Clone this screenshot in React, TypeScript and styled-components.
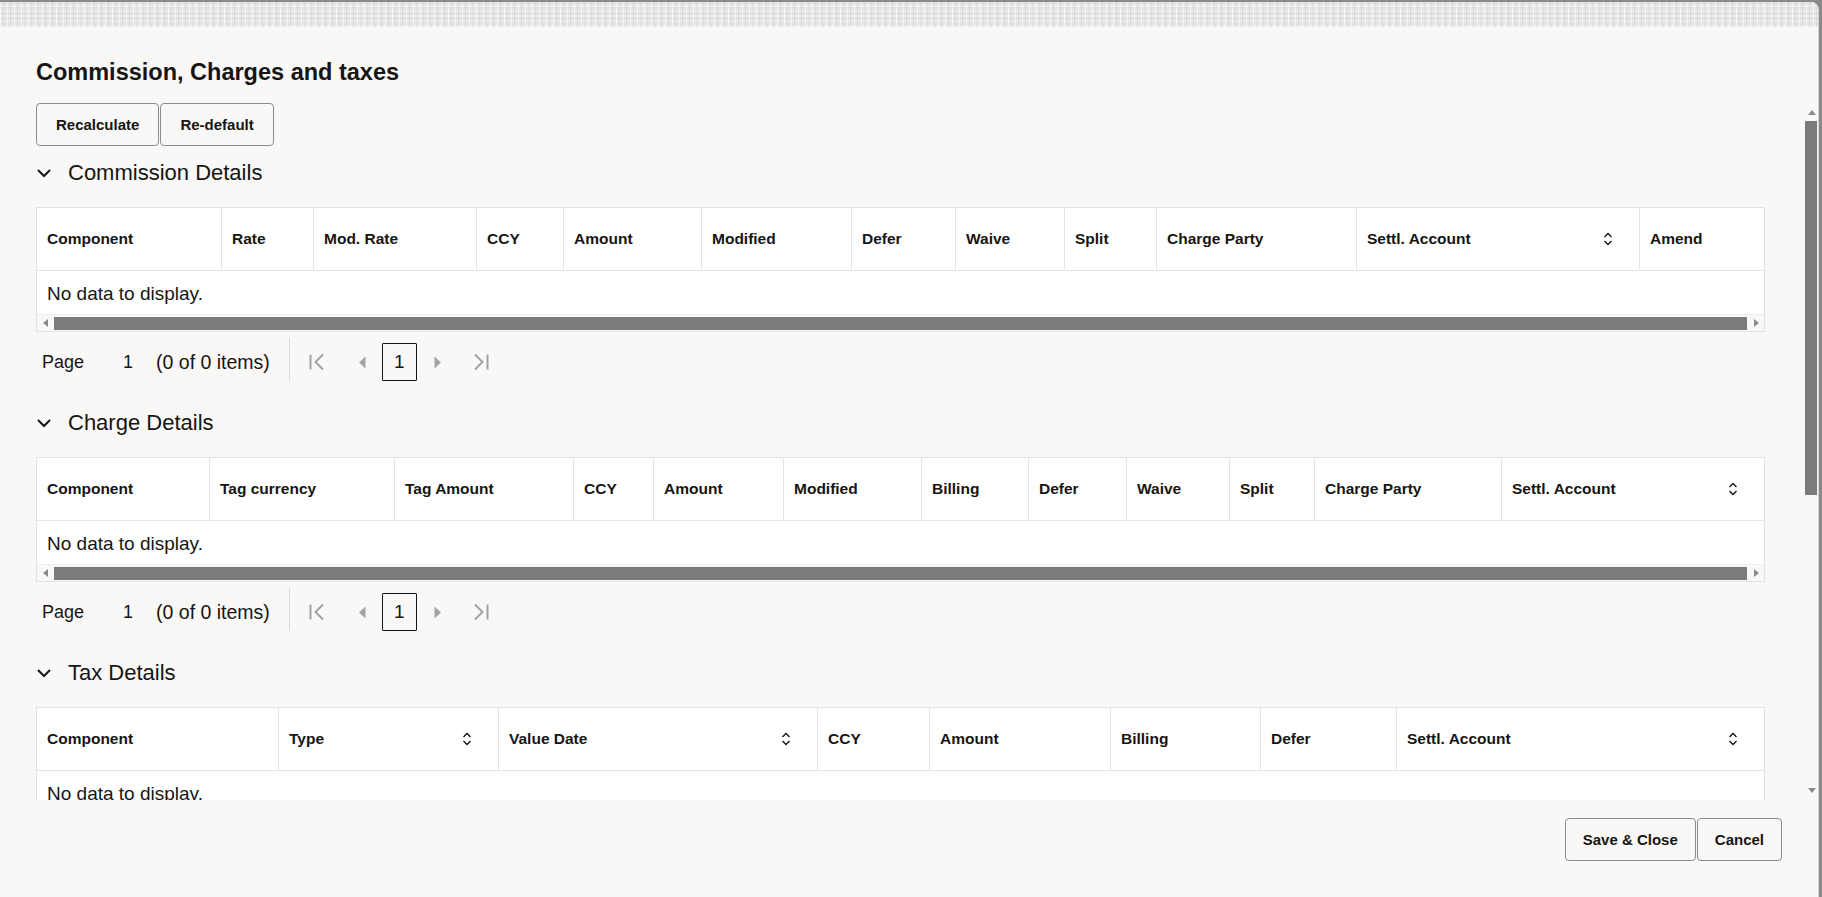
import React from 'react';
import styled, { createGlobalStyle } from 'styled-components';

const GlobalStyle = createGlobalStyle`
	html,
	body {
		margin: 0;
		padding: 0;
		height: 100%;
	}
	body {
		background: #8b8a88;
		color: #161513;
		font-family: 'Liberation Sans', Arial, sans-serif;
		overflow: hidden;
	}
	#root {
		height: 100%;
	}
`;

type Column = { label: string; width: number; sortable?: boolean };

const commissionCols: Column[] = [
	{ label: 'Component', width: 184 },
	{ label: 'Rate', width: 92 },
	{ label: 'Mod. Rate', width: 163 },
	{ label: 'CCY', width: 87 },
	{ label: 'Amount', width: 138 },
	{ label: 'Modified', width: 150 },
	{ label: 'Defer', width: 104 },
	{ label: 'Waive', width: 109 },
	{ label: 'Split', width: 92 },
	{ label: 'Charge Party', width: 200 },
	{ label: 'Settl. Account', width: 283, sortable: true },
	{ label: 'Amend', width: 0 },
];

const chargeCols: Column[] = [
	{ label: 'Component', width: 172 },
	{ label: 'Tag currency', width: 185 },
	{ label: 'Tag Amount', width: 179 },
	{ label: 'CCY', width: 80 },
	{ label: 'Amount', width: 130 },
	{ label: 'Modified', width: 138 },
	{ label: 'Billing', width: 107 },
	{ label: 'Defer', width: 98 },
	{ label: 'Waive', width: 103 },
	{ label: 'Split', width: 85 },
	{ label: 'Charge Party', width: 187 },
	{ label: 'Settl. Account', width: 0, sortable: true },
];

const taxCols: Column[] = [
	{ label: 'Component', width: 241 },
	{ label: 'Type', width: 220, sortable: true },
	{ label: 'Value Date', width: 319, sortable: true },
	{ label: 'CCY', width: 112 },
	{ label: 'Amount', width: 181 },
	{ label: 'Billing', width: 150 },
	{ label: 'Defer', width: 136 },
	{ label: 'Settl. Account', width: 0, sortable: true },
];

const template = (cols: Column[]) => cols.map((c) => (c.width ? `${c.width}px` : '1fr')).join(' ');

// ---------- frame ----------

const Frame = styled.div`
	width: 1819px;
	height: 100vh;
	padding-top: 2px;
	box-sizing: border-box;
`;

const Dialog = styled.div`
	height: 100%;
	display: flex;
	flex-direction: column;
	background: #f9f8f6;
	border-right: 1px solid #d2d1cf;
	border-top-right-radius: 8px;
	overflow: hidden;
`;

const Strip = styled.div`
	flex: none;
	height: 25px;
	background:
		repeating-linear-gradient(90deg, rgba(255, 255, 255, 0.55) 0 1px, transparent 1px 3px, rgba(0, 0, 0, 0.05) 3px 4px, transparent 4px 7px),
		repeating-linear-gradient(0deg, rgba(255, 255, 255, 0.4) 0 2px, transparent 2px 5px),
		#e3e2e0;
`;

const Header = styled.div`
	flex: none;
	height: 76px;
	box-sizing: border-box;
	padding: 31px 36px 0;
`;

const Title = styled.h1`
	margin: 0;
	font-size: 23.5px;
	line-height: 28px;
	font-weight: 700;
	color: #161513;
`;

const ScrollArea = styled.div`
	flex: none;
	height: 697px;
	display: flex;
`;

const Content = styled.div`
	flex: 1;
	min-width: 0;
	overflow: hidden;
	padding: 0 40px 0 36px;
`;

const VScroll = styled.div`
	flex: none;
	width: 13px;
	display: flex;
	flex-direction: column;
	align-items: center;
	padding: 5px 0 5px;
	box-sizing: border-box;
`;

const VArrow = styled.div`
	height: 10px;
	width: 13px;
	display: flex;
	align-items: center;
	justify-content: center;
`;

const VThumb = styled.div`
	margin-top: 3px;
	width: 12px;
	height: 374px;
	align-self: flex-start;
	background: #7b7b7b;
`;

const Spacer = styled.div`
	flex: 1;
`;

const Footer = styled.div`
	flex: 1;
	display: flex;
	justify-content: flex-end;
	align-items: flex-start;
	padding: 18px 36px 0 0;
	gap: 1px;
`;

// ---------- buttons ----------

const ButtonRow = styled.div`
	display: flex;
	gap: 1px;
	margin-bottom: 7px;
`;

const Button = styled.button<{ $compact?: boolean }>`
	height: 43px;
	padding: 0 ${(p) => (p.$compact ? 17 : 19)}px;
	border: 1px solid #8e8c8a;
	border-radius: 4px;
	background: transparent;
	color: #161513;
	font-family: 'Liberation Sans', Arial, sans-serif;
	font-size: 15px;
	font-weight: 700;
	cursor: pointer;
`;

// ---------- sections ----------

const Section = styled.section`
	& + & {
		margin-top: 17px;
	}
`;

const SectionHeader = styled.div`
	height: 40px;
	display: flex;
	align-items: center;
	gap: 16px;
	margin-bottom: 14px;
	font-size: 22px;
	color: #161513;
`;

const Table = styled.div`
	border: 1px solid #e4e3e1;
	background: #fff;
`;

const HeadRow = styled.div<{ $cols: string }>`
	display: grid;
	grid-template-columns: ${(p) => p.$cols};
	height: 62px;
	border-bottom: 1px solid #e4e3e1;
`;

const HeadCell = styled.div`
	display: flex;
	align-items: center;
	justify-content: space-between;
	padding: 0 10px;
	font-size: 15.5px;
	font-weight: 700;
	white-space: nowrap;
	& + & {
		border-left: 1px solid #e4e3e1;
	}
	svg {
		margin-right: 16px;
	}
`;

const EmptyRow = styled.div`
	height: 43px;
	display: flex;
	align-items: center;
	padding: 2px 10px 0;
	box-sizing: border-box;
	font-size: 19px;
`;

const HScroll = styled.div`
	height: 17px;
	display: flex;
	align-items: stretch;
	background: #f8f8f8;
	border-top: 1px solid #eeeeee;
	box-sizing: border-box;
`;

const HArrow = styled.div`
	width: 17px;
	display: flex;
	align-items: center;
	justify-content: center;
`;

const HThumb = styled.div`
	flex: 1;
	margin: 2px 0 1px;
	background: #7b7b7b;
`;

// ---------- pager ----------

const Pager = styled.div`
	height: 48px;
	margin-top: 6px;
	display: flex;
	align-items: center;
	font-size: 18px;
	color: #161513;
`;

const PageLabel = styled.span`
	margin-left: 6px;
`;

const PageInput = styled.span`
	width: 50px;
	margin-left: 19px;
	text-align: center;
`;

const Items = styled.span`
	margin-left: 3px;
	font-size: 19.5px;
`;

const Divider = styled.div`
	align-self: flex-start;
	width: 1px;
	height: 43px;
	margin-left: 19px;
	background: #d9d8d6;
`;

const NavBtn = styled.div<{ $gap: number }>`
	width: 40px;
	height: 38px;
	margin-left: ${(p) => p.$gap}px;
	display: flex;
	align-items: center;
	justify-content: center;
	color: #a3a2a0;
`;

const PageBox = styled.div`
	width: 35px;
	height: 38px;
	box-sizing: border-box;
	border: 1.5px solid #161513;
	border-radius: 1px;
	display: flex;
	align-items: center;
	justify-content: center;
	font-size: 19px;
`;

// ---------- icons ----------

const Chevron = () => (
	<svg width='16' height='10' viewBox='0 0 16 10'>
		<path d='M2 2 L8 8 L14 2' fill='none' stroke='#161513' strokeWidth='2' />
	</svg>
);

const SortIcon = () => (
	<svg width='10' height='14' viewBox='0 0 10 14'>
		<path
			d='M1.5 5 L5 1.5 L8.5 5 M1.5 9 L5 12.5 L8.5 9'
			fill='none'
			stroke='#161513'
			strokeWidth='1.4'
		/>
	</svg>
);

const FirstIcon = () => (
	<svg width='18' height='18' viewBox='0 0 18 18'>
		<path d='M2.5 1.5 V16.5 M15 1.5 L7.5 9 L15 16.5' fill='none' stroke='currentColor' strokeWidth='2' />
	</svg>
);

const LastIcon = () => (
	<svg width='18' height='18' viewBox='0 0 18 18'>
		<path d='M15.5 1.5 V16.5 M3 1.5 L10.5 9 L3 16.5' fill='none' stroke='currentColor' strokeWidth='2' />
	</svg>
);

const PrevIcon = () => (
	<svg width='8' height='13' viewBox='0 0 8 13'>
		<path d='M7.5 0.5 L1 6.5 L7.5 12.5 Z' fill='currentColor' />
	</svg>
);

const NextIcon = () => (
	<svg width='8' height='13' viewBox='0 0 8 13'>
		<path d='M0.5 0.5 L7 6.5 L0.5 12.5 Z' fill='currentColor' />
	</svg>
);

const Tri = ({ dir }: { dir: 'up' | 'down' | 'left' | 'right' }) => {
	const d = {
		up: 'M0 6 L4 1 L8 6 Z',
		down: 'M0 2 L4 7 L8 2 Z',
		left: 'M6 0 L1 4 L6 8 Z',
		right: 'M2 0 L7 4 L2 8 Z',
	}[dir];
	return (
		<svg width='8' height='8' viewBox='0 0 8 8'>
			<path d={d} fill='#8a8a8a' />
		</svg>
	);
};

// ---------- parts ----------

const Grid = ({ cols }: { cols: Column[] }) => (
	<Table>
		<HeadRow $cols={template(cols)}>
			{cols.map((c) => (
				<HeadCell key={c.label}>
					<span>{c.label}</span>
					{c.sortable && <SortIcon />}
				</HeadCell>
			))}
		</HeadRow>
		<EmptyRow>No data to display.</EmptyRow>
		<HScroll>
			<HArrow>
				<Tri dir='left' />
			</HArrow>
			<HThumb />
			<HArrow>
				<Tri dir='right' />
			</HArrow>
		</HScroll>
	</Table>
);

const Pagination = () => (
	<Pager>
		<PageLabel>Page</PageLabel>
		<PageInput>1</PageInput>
		<Items>(0 of 0 items)</Items>
		<Divider />
		<NavBtn $gap={7}>
			<FirstIcon />
		</NavBtn>
		<NavBtn $gap={5}>
			<PrevIcon />
		</NavBtn>
		<PageBox>1</PageBox>
		<NavBtn $gap={1}>
			<NextIcon />
		</NavBtn>
		<NavBtn $gap={3}>
			<LastIcon />
		</NavBtn>
	</Pager>
);

const DetailSection = ({
	title,
	cols,
	pager = true,
}: {
	title: string;
	cols: Column[];
	pager?: boolean;
}) => (
	<Section>
		<SectionHeader>
			<Chevron />
			<span>{title}</span>
		</SectionHeader>
		<Grid cols={cols} />
		{pager && <Pagination />}
	</Section>
);

export default function App() {
	return (
		<>
			<GlobalStyle />
			<Frame>
				<Dialog>
					<Strip />
					<Header>
						<Title>Commission, Charges and taxes</Title>
					</Header>
					<ScrollArea>
						<Content>
							<ButtonRow>
								<Button>Recalculate</Button>
								<Button>Re-default</Button>
							</ButtonRow>
							<DetailSection
								title='Commission Details'
								cols={commissionCols}
							/>
							<DetailSection
								title='Charge Details'
								cols={chargeCols}
							/>
							{/* the pager of this section sits below the fold */}
							<DetailSection
								title='Tax Details'
								cols={taxCols}
								pager={false}
							/>
						</Content>
						<VScroll>
							<VArrow>
								<Tri dir='up' />
							</VArrow>
							<VThumb />
							<Spacer />
							<VArrow>
								<Tri dir='down' />
							</VArrow>
						</VScroll>
					</ScrollArea>
					<Footer>
						<Button $compact>Save &amp; Close</Button>
						<Button $compact>Cancel</Button>
					</Footer>
				</Dialog>
			</Frame>
		</>
	);
}
